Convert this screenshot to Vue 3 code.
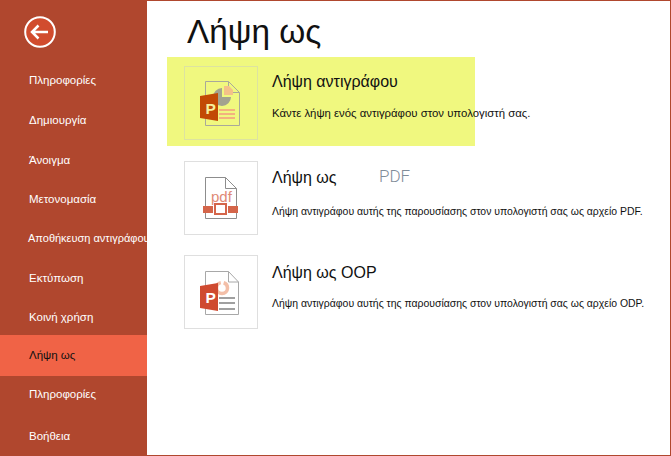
<script setup>
const navItems = [
  { label: 'Πληροφορίες', h: 40 },
  { label: 'Δημιουργία', h: 40 },
  { label: 'Άνοιγμα', h: 39 },
  { label: 'Μετονομασία', h: 39 },
  { label: 'Αποθήκευση αντιγράφου', h: 39, tight: true },
  { label: 'Εκτύπωση', h: 42 },
  { label: 'Κοινή χρήση', h: 36 },
  { label: 'Λήψη ως', h: 41, active: true },
  { label: 'Πληροφορίες', h: 36 },
  { label: 'Βοήθεια', h: 47 }
]
</script>

<template>
  <div class="window">
    <aside class="sidebar">
      <div class="back">
        <svg width="32" height="32" viewBox="0 0 32 32">
          <circle cx="16" cy="16" r="14.8" fill="#d14c2e" stroke="#fff" stroke-width="2" />
          <path d="M8 16H24M14.5 9.5L8 16L14.5 22.5" fill="none" stroke="#fff" stroke-width="2.5" />
        </svg>
      </div>
      <nav class="nav">
        <div
          v-for="item in navItems"
          :key="item.label + item.h"
          class="nav-item"
          :class="{ active: item.active, tight: item.tight }"
          :style="{ height: item.h + 'px' }"
        >{{ item.label }}</div>
      </nav>
    </aside>
    <main class="content">
      <h1 class="title">Λήψη ως</h1>
      <div class="row first">
        <div class="icon-box">
          <svg width="44" height="48" viewBox="0 0 44 48">
            <path d="M6.500 2.500H29.500L40.500 13.500V46.500H6.500Z" fill="none" stroke="#a9a99a" />
            <path d="M29.500 2.500V13.500H40.500" fill="none" stroke="#a9a99a" />
            <path d="M23 9A9 9 0 1 0 32 18H23Z" fill="#a3a38f" />
            <path d="M25 7V16H34V11L30 7Z" fill="#f4c189" />
            <rect x="20" y="30" width="16" height="2" fill="#f3b27f" />
            <rect x="20" y="34" width="16" height="2" fill="#f3b27f" />
            <rect x="20" y="38" width="16" height="2" fill="#f3b27f" />
            <path d="M1 17L19 14V42L1 39Z" fill="#c24a05" />
            <text x="6.500" y="35" class="p-letter" fill="#f5f09c">P</text>
          </svg>
        </div>
        <div class="text">
          <div class="row-title">Λήψη αντιγράφου</div>
          <div class="row-desc">Κάντε λήψη ενός αντιγράφου στον υπολογιστή σας.</div>
        </div>
      </div>
      <div class="row second">
        <div class="icon-box">
          <svg width="36" height="44" viewBox="0 0 36 44">
            <path d="M2.500 1.500H22.500L33.500 12.500V42.500H2.500Z" fill="#fff" stroke="#8d8d8d" />
            <path d="M22.500 1.500V12.500H33.500" fill="none" stroke="#8d8d8d" />
            <text x="8" y="26" class="pdf-letters" fill="#e08a75">pdf</text>
            <rect x="0" y="30" width="10" height="7" fill="#d4654a" />
            <rect x="25" y="30" width="10" height="7" fill="#d4654a" />
            <rect x="12" y="28" width="11" height="10" fill="#fff" stroke="#d4654a" stroke-width="2" />
          </svg>
        </div>
        <div class="text">
          <div class="row-title">Λήψη ως <span class="ghost">PDF</span></div>
          <div class="row-desc">Λήψη αντιγράφου αυτής της παρουσίασης στον υπολογιστή σας ως αρχείο PDF.</div>
        </div>
      </div>
      <div class="row third">
        <div class="icon-box">
          <svg width="44" height="46" viewBox="0 0 44 46">
            <path d="M6.500 2.500H29.500L39.500 13V45.500H6.500Z" fill="#fff" stroke="#a8a8a8" />
            <path d="M29.500 2.500V13H39.500" fill="none" stroke="#a8a8a8" />
            <circle cx="23" cy="19" r="5.500" fill="none" stroke="#f3bfa8" stroke-width="3.500" stroke-dasharray="24 3 8" />
            <rect x="20" y="28" width="16" height="2" fill="#a0a0a0" />
            <rect x="20" y="33" width="16" height="2" fill="#a0a0a0" />
            <rect x="20" y="39" width="16" height="2" fill="#a0a0a0" />
            <path d="M1 17L19 14V42L1 39Z" fill="#cf4a30" />
            <text x="6.500" y="34" class="p-letter" fill="#fff">P</text>
          </svg>
        </div>
        <div class="text">
          <div class="row-title">Λήψη ως ΟΟΡ</div>
          <div class="row-desc">Λήψη αντιγράφου αυτής της παρουσίασης στον υπολογιστή σας ως αρχείο ODP.</div>
        </div>
      </div>
    </main>
  </div>
</template>

<style>
html, body { margin: 0; background: #fff; }
</style>

<style scoped>
.window {
  width: 671px;
  height: 456px;
  box-sizing: border-box;
  display: flex;
  overflow: hidden;
  background: #fff;
  font-family: "Liberation Sans", Arial, sans-serif;
  color: #111;
  border-top: 1px solid #b0472e;
  border-bottom: 1px solid #b0472e;
  border-right: 1px solid #b0472e;
}
.sidebar {
  width: 147px;
  flex: none;
  background: #b0472e;
  color: #fff;
  overflow: hidden;
}
.back {
  height: 59px;
  padding: 15px 0 0 24px;
  box-sizing: border-box;
}
.back svg { display: block; }
.nav-item {
  display: flex;
  align-items: center;
  box-sizing: border-box;
  padding-left: 29px;
  font-size: 11.500px;
  white-space: nowrap;
}
.nav-item.tight {
  padding-left: 28px;
  font-size: 11px;
}
.nav-item.active {
  background: #f06346;
  color: #111;
  padding-bottom: 2px;
}
.content {
  flex: 1;
  padding-left: 37px;
  position: relative;
}
.title {
  margin: 0;
  padding-left: 3px;
  font-size: 33.300px;
  font-weight: 400;
  line-height: 40px;
  padding-top: 11px;
  height: 65px;
  box-sizing: border-box;
}
.row {
  display: flex;
  position: relative;
}
.row.first::before {
  content: "";
  position: absolute;
  left: -17px;
  top: -9px;
  width: 308px;
  height: 89px;
  background: #f0f87f;
}
.row.second { margin-top: 21px; }
.row.third { margin-top: 20px; }
.icon-box {
  position: relative;
  width: 74px;
  height: 74px;
  box-sizing: border-box;
  border: 1px solid #dfdfdf;
  display: flex;
  align-items: center;
  justify-content: center;
}
.row.first .icon-box { border-color: #dde3a0; }
.text {
  position: relative;
  margin-left: 14px;
}
.row-title {
  font-size: 16px;
  line-height: 20px;
  margin-top: 6px;
}
.row-desc {
  font-size: 11.370px;
  line-height: 14px;
  margin-top: 14px;
  white-space: nowrap;
}
.row.second .row-title { margin-top: 6px; }
.row.second .row-desc { font-size: 10.450px; margin-top: 17px; }
.row.third .row-title { margin-top: 8px; }
.row.third .row-desc { font-size: 10.450px; margin-top: 14px; }
.ghost {
  font-family: Roboto, "Liberation Sans", sans-serif;
  font-weight: 300;
  font-size: 17px;
  color: #7f8c99;
  margin-left: 38px;
  position: relative;
  top: -1px;
}
.p-letter { font: 700 15.500px "Liberation Sans", sans-serif; }
.pdf-letters { font: 400 15px "Liberation Sans", sans-serif; }
</style>
